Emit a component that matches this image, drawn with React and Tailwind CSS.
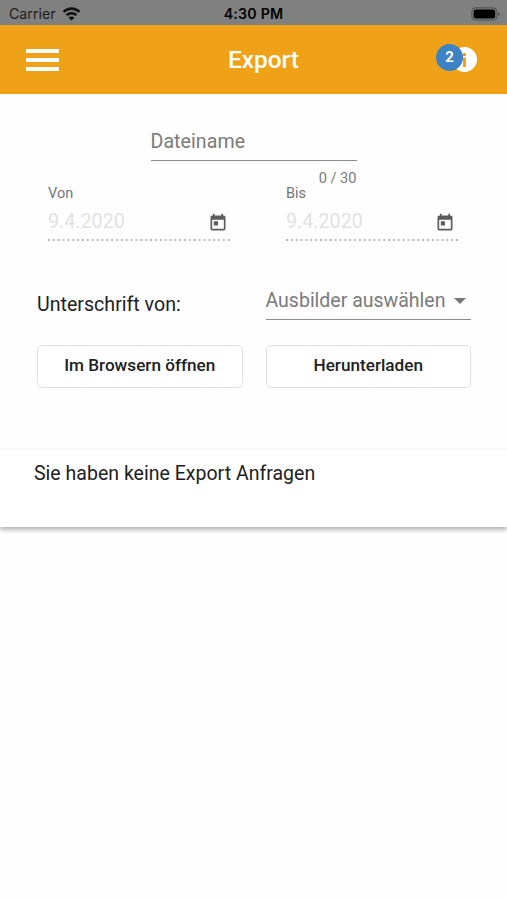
import React from "react";

function WifiIcon() {
  return (
    <svg className="ml-[6px] h-[14px] w-[19px]" viewBox="0 0 19 15" fill="none" stroke="#111" strokeWidth="2.7">
      <path d="M1 5.200C5.800 0.600 13.200 0.600 18 5.200" />
      <path d="M4.200 8.800C7.200 5.900 11.800 5.900 14.800 8.800" />
      <path d="M9.500 14.500L6.300 11.400C8.100 9.800 10.900 9.800 12.700 11.400Z" fill="#111" stroke="none" />
    </svg>
  );
}

function StatusBar() {
  return (
    <div className="grid h-[25px] grid-cols-3 items-center bg-[#808080] pt-[2px] font-[Inter,sans-serif] text-[#1c1c1c]">
      <div className="flex items-center pl-[9px] text-[14.2px] leading-[20px]">
        <span>Carrier</span>
        <WifiIcon />
      </div>
      <div className="text-center text-[14.2px] leading-[20px] font-semibold tracking-[0.2px] text-black">4:30 PM</div>
      <div className="flex justify-end pr-[6px]">
        <svg className="h-[14px] w-[30px]" viewBox="0 0 30 14">
          <rect x="0.9" y="0.9" width="25" height="12.2" rx="3.4" fill="none" stroke="#4d4d4d" strokeWidth="1" />
          <rect x="2.600" y="2.500" width="21.600" height="9" rx="2" fill="#000" />
          <path d="M27.300 5v4.200c1-.4 1.600-1.200 1.600-2.100s-.6-1.700-1.600-2.100z" fill="#4d4d4d" />
        </svg>
      </div>
    </div>
  );
}

function Header() {
  return (
    <header className="grid h-[69px] grid-cols-3 items-center bg-[#efa218] text-white">
      <div className="ml-[26px] flex w-[33px] flex-col gap-[5px]">
        <div className="h-[4px] bg-white" />
        <div className="h-[4px] bg-white" />
        <div className="h-[4px] bg-white" />
      </div>
      <h1 className="pl-[20px] text-center text-[24.4px] leading-[30px] font-medium">Export</h1>
      <div className="flex justify-end pr-[30px]">
        <div className="relative flex h-[25px] w-[25px] items-center justify-center rounded-full bg-white">
          <svg className="h-[14px] w-[7px]" viewBox="0 0 7 14" fill="#efa218">
            <path d="M2 0h3v3H2zM0 4.500h5V14H2V6.500H0z" />
          </svg>
          <span className="absolute -top-[3px] -left-[16px] flex h-[27px] w-[27px] items-center justify-center rounded-full bg-[#3c82c4] text-[15px] leading-none font-bold">
            2
          </span>
        </div>
      </div>
    </header>
  );
}

function CalendarIcon() {
  return (
    <svg className="h-[20px] w-[20px]" viewBox="0 0 24 24" fill="#5c5c5c">
      <path d="M19 3h-1V1h-2v2H8V1H6v2H5c-1.110 0-1.990.9-1.990 2L3 19c0 1.100.89 2 2 2h14c1.100 0 2-.9 2-2V5c0-1.100-.9-2-2-2zm0 16H5V8h14v11zM7 10h5v5H7z" />
    </svg>
  );
}

function DateField({ label, value, className, iconClassName }) {
  return (
    <div className={className}>
      <div className="pt-[1px] text-[14.5px] leading-[14px] text-[#757575]">{label}</div>
      <div className="flex h-[38px] items-center justify-between pt-[3px]">
        <span className="pt-[1px] text-[19.700px] leading-[24px] text-[#e2e2e2]">{value}</span>
        <span className={iconClassName}>
          <CalendarIcon />
        </span>
      </div>
      <div className="h-[2px] bg-[radial-gradient(circle_at_1px_1px,#b8b8b8_0.9px,transparent_1.3px)] bg-[length:4.870px_2px]" />
    </div>
  );
}

function OutlineButton({ children }) {
  return (
    <button className="h-[43px] rounded-[5px] border border-[#e0e0e0] bg-white pb-[3px] text-[17.150px] leading-[24px] font-medium text-[#212121]">
      {children}
    </button>
  );
}

export default function App() {
  return (
    <div className="h-[900px] w-[507px] overflow-hidden bg-[#fefefe] font-[Roboto,sans-serif]">
      <StatusBar />
      <Header />
      <main>
        <section className="h-[355px] pt-[28px]">
          <div className="mx-auto w-[206px]">
            <div className="h-[39px] border-b border-[#8c8c8c] text-[19.600px] leading-[39px] tracking-[0.050px] text-[#7a7a7a]">
              Dateiname
            </div>
            <div className="pt-[9px] text-right text-[14.600px] leading-[16px] text-[#7a7a7a]">0 / 30</div>
          </div>
          <div className="flex pl-[48px]">
            <DateField label="Von" value="9.4.2020" className="w-[184px]" iconClassName="mr-[4px] pt-[3px]" />
            <DateField label="Bis" value="9.4.2020" className="ml-[54px] w-[174px]" iconClassName="mr-[5px] pt-[3px]" />
          </div>
          <div className="mt-[40px] grid grid-cols-2 gap-x-[23px] pr-[36px] pl-[37px]">
            <div className="pt-[12px] text-[19.600px] leading-[24px] text-[#212121]">Unterschrift von:</div>
            <div className="flex h-[39px] items-center justify-between border-b border-[#8c8c8c] pt-[1px] pr-[5px] text-[19.500px] text-[#7a7a7a]">
              <span className="whitespace-nowrap">Ausbilder auswählen</span>
              <span className="border-x-[6px] border-t-[6px] border-x-transparent border-t-[#757575]" />
            </div>
          </div>
          <div className="mt-[25px] grid grid-cols-2 gap-x-[23px] pr-[36px] pl-[37px]">
            <OutlineButton>Im Browsern öffnen</OutlineButton>
            <OutlineButton>Herunterladen</OutlineButton>
          </div>
        </section>
        <section className="h-[78px] border-t border-[#f6f6f6] bg-white pt-[12px] pl-[34px] text-[19.550px] leading-[24px] text-[#212121] shadow-[0_3px_4px_0_rgba(0,0,0,0.28)]">
          Sie haben keine Export Anfragen
        </section>
      </main>
    </div>
  );
}
